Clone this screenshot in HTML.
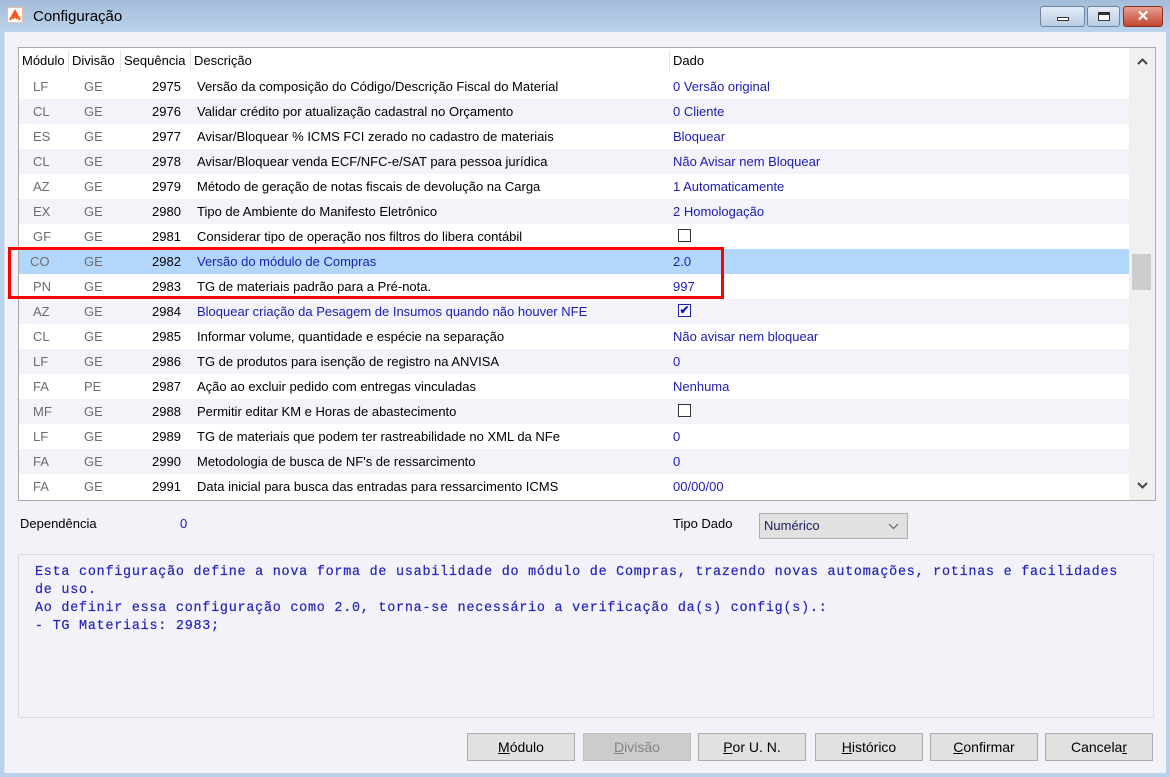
<!DOCTYPE html>
<html><head><meta charset="utf-8"><style>
*{margin:0;padding:0;box-sizing:border-box}
body{width:1170px;height:777px;overflow:hidden;background:#b9d1ea;font-family:"Liberation Sans",Arial,sans-serif;font-size:13px;position:relative}
.title{position:absolute;left:0;top:0;width:1170px;height:32px;background:linear-gradient(#a3bcd9,#bcd3ec)}
.title .t{position:absolute;left:33px;top:8px;font-size:15px;color:#000}
.icon{position:absolute;left:7px;top:7px;width:16px;height:16px;background:#fff;border:1px solid #e8c0a0}
.wb{position:absolute;top:6px;height:21px;border:1px solid #6d83a0;border-radius:3px;background:linear-gradient(#e4edf7,#b9cce3)}
.client{position:absolute;left:4px;top:32px;width:1162px;height:741px;background:#f2f2f8;border-left:1px solid #dfe6ef}
.grid{position:absolute;left:18px;top:47px;width:1138px;height:454px;background:#fff;border:1px solid #a9a9a9;overflow:hidden}
.row{position:absolute;left:0;width:1110px;height:25px;line-height:25px}
.row span{position:absolute;top:0;white-space:nowrap}
.g{color:#6d6d6d}
.b{color:#1c1cb0}
.hdr span{position:absolute;top:0;white-space:nowrap;color:#000;line-height:26px}
.sb{position:absolute;left:1110px;top:0;width:27px;height:452px;background:#f0f0f0}
.cb{display:inline-block;width:13px;height:13px;border:1px solid #333;background:#fff;vertical-align:middle;position:relative;top:-2px}
.btn{position:absolute;top:733px;height:28px;width:108px;border:1px solid #acacac;background:#e1e1e1;text-align:center;line-height:26px;font-size:14px;color:#000}
.memo{position:absolute;left:18px;top:554px;width:1136px;height:164px;border:1px solid #dcdcdc;background:#f2f2f8;font-family:"Liberation Mono",monospace;font-size:13.4px;letter-spacing:0.77px;color:#2424b8;padding:9px 0 0 16px;line-height:18px;white-space:pre;-webkit-text-stroke:0.2px #2424b8}
</style></head><body>
<div class="title">
<div class="icon"><svg width="14" height="14" viewBox="0 0 14 14"><path d="M2 12L7 3L12 12M4 8h6M5 11L7 7L9 11" stroke="#f05a1a" stroke-width="2" fill="none"/></svg></div>
<div class="t">Configuração</div>
<div class="wb" style="left:1040px;width:45px"><div style="position:absolute;left:16px;top:10px;width:12px;height:4px;border:1px solid #333;background:#fff"></div></div>
<div class="wb" style="left:1087px;width:33px"><div style="position:absolute;left:10px;top:5px;width:12px;height:9px;border:1px solid #333;border-top-width:3px;background:#fff"></div></div>
<div class="wb" style="left:1123px;width:40px;background:linear-gradient(#e8a093,#c2452e);border-color:#8a3020;color:#fff;text-align:center;font-weight:bold;font-size:15px;line-height:19px">✕</div>
</div>
<div class="client"></div>
<div class="grid">
<div class="row hdr" style="top:0;height:26px"><span style="left:3px">Módulo</span><span style="left:53px">Divisão</span><span style="left:105px">Sequência</span><span style="left:175px">Descrição</span><span style="left:654px">Dado</span>
<div style="position:absolute;left:49px;top:2px;width:1px;height:22px;background:#e5e5e5"></div><div style="position:absolute;left:101px;top:2px;width:1px;height:22px;background:#e5e5e5"></div><div style="position:absolute;left:171px;top:2px;width:1px;height:22px;background:#e5e5e5"></div><div style="position:absolute;left:650px;top:2px;width:1px;height:22px;background:#e5e5e5"></div></div>
<div id="rows"></div>
<div class="sb"><svg style="position:absolute;left:8px;top:10px" width="11" height="8"><path d="M1 6l4.5-4.5L10 6" stroke="#444" stroke-width="2" fill="none"/></svg>
<div style="position:absolute;left:3px;top:206px;width:19px;height:36px;background:#cdcdcd"></div>
<svg style="position:absolute;left:8px;top:434px" width="11" height="8"><path d="M1 1l4.5 4.5L10 1" stroke="#444" stroke-width="2" fill="none"/></svg></div>
</div>
<div style="position:absolute;left:20px;top:516px">Dependência</div>
<div style="position:absolute;left:180px;top:516px;color:#1c1cb0">0</div>
<div style="position:absolute;left:673px;top:516px">Tipo Dado</div>
<div style="position:absolute;left:759px;top:513px;width:149px;height:26px;border:1px solid #adadad;background:#e1e1e1;line-height:24px;padding-left:4px;color:#1c1c60">Numérico<svg style="position:absolute;right:8px;top:9px" width="11" height="7"><path d="M1 1l4.5 4.5L10 1" stroke="#555" fill="none"/></svg></div>
<div class="memo">Esta configuração define a nova forma de usabilidade do módulo de Compras, trazendo novas automações, rotinas e facilidades
de uso.
Ao definir essa configuração como 2.0, torna-se necessário a verificação da(s) config(s).:
- TG Materiais: 2983;</div>
<div class="btn" style="left:467px"><u>M</u>ódulo</div>
<div class="btn" style="left:583px;background:#cccccc;color:#838383;border-color:#bfbfbf"><u>D</u>ivisão</div>
<div class="btn" style="left:698px"><u>P</u>or U. N.</div>
<div class="btn" style="left:815px"><u>H</u>istórico</div>
<div class="btn" style="left:930px"><u>C</u>onfirmar</div>
<div class="btn" style="left:1045px">Cancela<u>r</u></div>
<div style="position:absolute;left:8px;top:247px;width:716px;height:52px;border:3px solid #f00"></div>
<script>
var d=[["LF","GE","2975","Versão da composição do Código/Descrição Fiscal do Material","0 Versão original"],
["CL","GE","2976","Validar crédito por atualização cadastral no Orçamento","0 Cliente"],
["ES","GE","2977","Avisar/Bloquear % ICMS FCI zerado no cadastro de materiais","Bloquear"],
["CL","GE","2978","Avisar/Bloquear venda ECF/NFC-e/SAT para pessoa jurídica","Não Avisar nem Bloquear"],
["AZ","GE","2979","Método de geração de notas fiscais de devolução na Carga","1 Automaticamente"],
["EX","GE","2980","Tipo de Ambiente do Manifesto Eletrônico","2 Homologação"],
["GF","GE","2981","Considerar tipo de operação nos filtros do libera contábil","#0"],
["CO","GE","2982","Versão do módulo de Compras","2.0"],
["PN","GE","2983","TG de materiais padrão para a Pré-nota.","997"],
["AZ","GE","2984","Bloquear criação da Pesagem de Insumos quando não houver NFE","#1"],
["CL","GE","2985","Informar volume, quantidade e espécie na separação","Não avisar nem bloquear"],
["LF","GE","2986","TG de produtos para isenção de registro na ANVISA","0"],
["FA","PE","2987","Ação ao excluir pedido com entregas vinculadas","Nenhuma"],
["MF","GE","2988","Permitir editar KM e Horas de abastecimento","#0"],
["LF","GE","2989","TG de materiais que podem ter rastreabilidade no XML da NFe","0"],
["FA","GE","2990","Metodologia de busca de NF's de ressarcimento","0"],
["FA","GE","2991","Data inicial para busca das entradas para ressarcimento ICMS","00/00/00"]];
var h="";
d.forEach(function(r,i){
var bg=i==7?"#b3d7fb":(i%2?"#f3f3f9":"#fff");
var dc=(i==7||i==9)?"b":"";
var v=r[4]=="#0"?'<i class="cb"></i>':r[4]=="#1"?'<i class="cb" style="border-color:#1c1cb0;color:#1c1cb0;font-style:normal;font-size:12px;line-height:11px;text-align:center;font-weight:bold">✔</i>':r[4];
var vl=(r[4][0]=="#")?659:654;
h+='<div class="row" style="top:'+(26+i*25)+'px;background:'+bg+'"><span class="g" style="left:'+(i==7?11:14)+'px">'+r[0]+'</span><span class="g" style="left:65px">'+r[1]+'</span><span style="left:133px">'+r[2]+'</span><span class="'+dc+'" style="left:178px">'+r[3]+'</span><span class="b" style="left:'+vl+'px">'+v+'</span></div>';
});
document.getElementById("rows").innerHTML=h;
</script>
</body></html>
